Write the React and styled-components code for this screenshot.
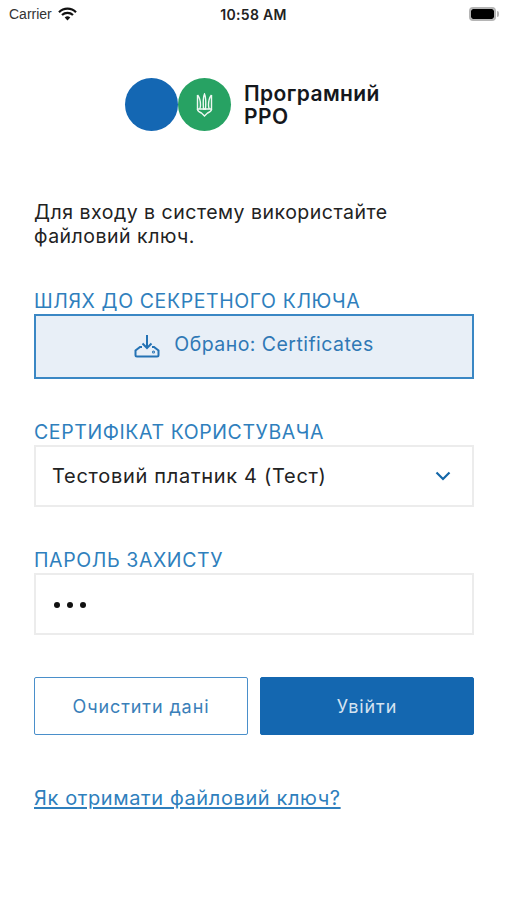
import React from "react";
import styled, { createGlobalStyle } from "styled-components";

const GlobalStyle = createGlobalStyle`
  html, body {
    margin: 0;
    padding: 0;
    background: #fff;
  }
  * {
    box-sizing: border-box;
  }
`;

const App = () => (
  <>
    <GlobalStyle />
    <Page>
      <StatusBar>
        <StatusLeft>
          Carrier
          <svg width="19" height="14" viewBox="0 0 19 14">
            <path d="M1 5.2a12 12 0 0 1 17 0" fill="none" stroke="#111" strokeWidth="2.2" />
            <path d="M4 8a8 8 0 0 1 11 0" fill="none" stroke="#111" strokeWidth="2.2" />
            <path d="M9.5 13.4 6.7 10.5a4 4 0 0 1 5.6 0z" fill="#111" />
          </svg>
        </StatusLeft>
        <StatusTime>10:58 AM</StatusTime>
        <StatusRight>
          <Battery />
        </StatusRight>
      </StatusBar>

      <Content>
        <Logo>
          <Circle $color="#1467b3" />
          <Circle $color="#27a263">
            <svg width="19" height="24" viewBox="0 0 18 24" fill="none" stroke="#eef8f2" strokeWidth="1.4">
              <path d="M9 1C7.6 4 7.4 8 8 16h2c.6-8 .4-12-1-15z" />
              <path d="M2 2v14h14V2" />
              <path d="M2 2c2 2.500 3 6 3 10 0 1.500-.3 3-.8 4M16 2c-2 2.500-3 6-3 10 0 1.500.3 3 .8 4" />
              <path d="M2 16c0 3 3 3.500 4 4l3 3 3-3c1-.5 4-1 4-4" />
            </svg>
          </Circle>
          <LogoText>
            Програмний
            <br />
            РРО
          </LogoText>
        </Logo>

        <Intro>Для входу в систему використайте файловий ключ.</Intro>

        <Field $gap={42}>
          <Label>ШЛЯХ ДО СЕКРЕТНОГО КЛЮЧА</Label>
          <FilePicker>
            <svg width="27" height="24" viewBox="0 0 27 24" fill="none" stroke="#2472b4" strokeWidth="2">
              <path d="M13 1v13M8.500 9.500 13 14l4.500-4.500" />
              <path d="M8 13H6l-4.500 3.500V21A1.500 1.500 0 0 0 3 22.500h20a1.500 1.500 0 0 0 1.500-1.500v-4.500L20 13h-2" />
              <circle cx="19.500" cy="18" r=".5" />
            </svg>
            Обрано: Certificates
          </FilePicker>
        </Field>

        <Field $gap={42}>
          <Label>СЕРТИФІКАТ КОРИСТУВАЧА</Label>
          <Input>
            Тестовий платник 4 (Тест)
            <svg width="16" height="10" viewBox="0 0 16 10" fill="none" stroke="#1467a8" strokeWidth="2.200">
              <path d="M1.500 1.500 8 8l6.500-6.500" />
            </svg>
          </Input>
        </Field>

        <Field $gap={42}>
          <Label>ПАРОЛЬ ЗАХИСТУ</Label>
          <Input>
            <Dots>
              <i />
              <i />
              <i />
            </Dots>
          </Input>
        </Field>

        <Buttons>
          <Button>Очистити дані</Button>
          <Button $primary>Увійти</Button>
        </Buttons>

        <HelpLink href="#">Як отримати файловий ключ?</HelpLink>
      </Content>
    </Page>
  </>
);

export default App;

const Page = styled.div`
  width: 507px;
  height: 900px;
  overflow: hidden;
  background: #fff;
  font-family: "Inter", "Noto Sans", sans-serif;
`;

const StatusBar = styled.div`
  display: grid;
  grid-template-columns: 1fr auto 1fr;
  align-items: center;
  height: 28px;
  padding: 0 9px;
  color: #222;
  font-family: "Liberation Sans", sans-serif;
  font-size: 14px;
`;

const StatusLeft = styled.div`
  display: flex;
  align-items: center;
  gap: 6px;
  color: #333;
`;

const StatusTime = styled.div`
  font-family: "Inter", sans-serif;
  font-weight: 600;
  font-size: 14px;
  letter-spacing: 0.3px;
`;

const StatusRight = styled.div`
  display: flex;
  justify-content: flex-end;
`;

const Battery = styled.div`
  position: relative;
  width: 27px;
  height: 14px;
  border: 2px solid #b5b5b5;
  border-radius: 4px;
  background: #000;
  background-clip: padding-box;
  margin-right: 2px;
  &::after {
    content: "";
    position: absolute;
    top: 2px;
    right: -5px;
    width: 2px;
    height: 6px;
    border-radius: 0 2px 2px 0;
    background: #b5b5b5;
  }
`;

const Content = styled.div`
  padding: 50px 33px 0 34px;
`;

const Logo = styled.div`
  display: flex;
  align-items: center;
  padding-left: 91px;
`;

const Circle = styled.div`
  display: flex;
  align-items: center;
  justify-content: center;
  width: 53px;
  height: 53px;
  border-radius: 50%;
  background: ${(p) => p.$color};
`;

const LogoText = styled.div`
  margin-left: 13px;
  color: #14171c;
  font-size: 21px;
  line-height: 23px;
  font-weight: 600;
  letter-spacing: 0.4px;
`;

const Intro = styled.p`
  margin: 69px 0 0;
  width: 400px;
  color: #222;
  font-size: 19.5px;
  line-height: 24px;
  letter-spacing: 0.5px;
`;

const Field = styled.div`
  margin-top: ${(p) => p.$gap}px;
`;

const Label = styled.div`
  color: #2f7fbd;
  font-size: 19.5px;
  line-height: 22px;
  letter-spacing: 0.6px;
  margin-bottom: 2px;
  white-space: nowrap;
`;

const FilePicker = styled.div`
  display: flex;
  align-items: center;
  justify-content: center;
  gap: 13px;
  height: 65px;
  padding-bottom: 5px;
  border: 2px solid #3a87c4;
  background: #e8eff7;
  color: #2f78b5;
  font-size: 19.5px;
  letter-spacing: 0.45px;
  svg {
    margin-top: 4px;
  }
`;

const Input = styled.div`
  display: flex;
  align-items: center;
  justify-content: space-between;
  height: 62px;
  padding: 0 21px 0 16px;
  border: 2px solid #ececec;
  color: #222;
  font-size: 20px;
  letter-spacing: 0.7px;
`;

const Dots = styled.div`
  display: flex;
  gap: 7px;
  margin: 2px 0 0 2px;
  i {
    display: block;
    width: 6px;
    height: 6px;
    border-radius: 50%;
    background: #111;
  }
`;

const Buttons = styled.div`
  display: grid;
  grid-template-columns: 214px 214px;
  gap: 12px;
  margin-top: 42px;
`;

const Button = styled.div`
  display: flex;
  align-items: center;
  justify-content: center;
  height: 58px;
  border-radius: 2px;
  border: 1.5px solid ${(p) => (p.$primary ? "#1467b0" : "#4a8fca")};
  background: ${(p) => (p.$primary ? "#1467b0" : "#fff")};
  color: ${(p) => (p.$primary ? "#d5e3f1" : "#3a7fb9")};
  font-size: 18px;
  letter-spacing: 0.9px;
`;

const HelpLink = styled.a`
  display: inline-block;
  margin-top: 50px;
  color: #2f7fbd;
  font-size: 20px;
  line-height: 26px;
  letter-spacing: 0.6px;
  text-decoration: underline;
  text-underline-offset: 2px;
`;
